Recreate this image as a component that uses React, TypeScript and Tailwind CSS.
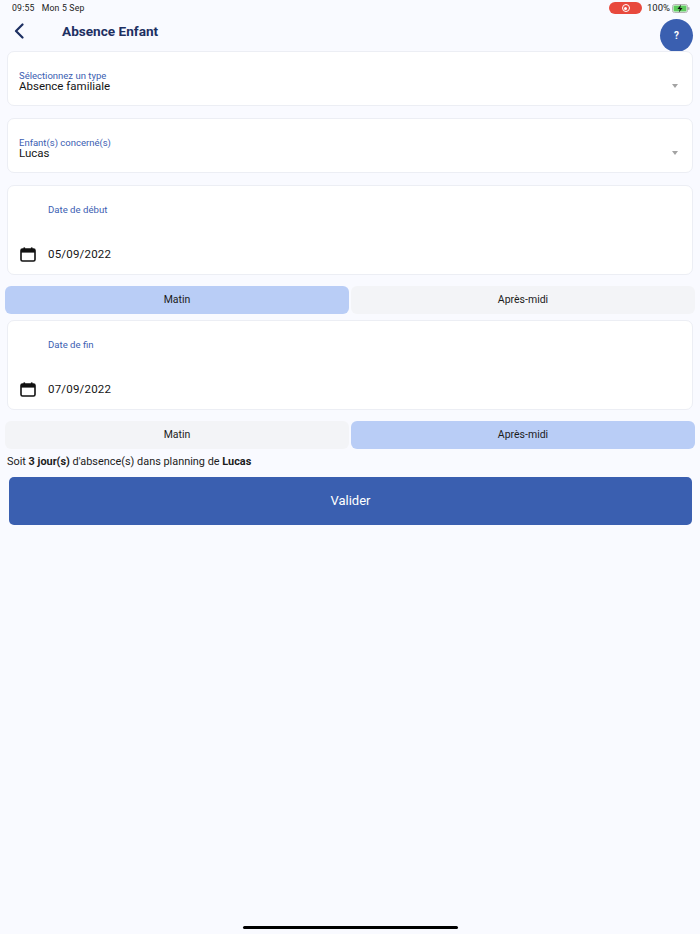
const SelectCard = ({ label, value, mb }: { label: string; value: string; mb: string }) => (
  <div className={`mx-[7px] ${mb} relative h-[55px] rounded-[7px] border border-[#eceef4] bg-white pl-[11px] pt-[18px]`}>
    <div className="text-[9.5px] leading-[11px] text-[#3b60b2]">{label}</div>
    <div className="text-[11.5px] leading-[11px] text-[#151515]">{value}</div>
    <div className="absolute right-[14px] top-[32px] h-0 w-0 border-x-[3.5px] border-t-[4px] border-x-transparent border-t-[#a3a3a3]" />
  </div>
)

const CalendarIcon = () => (
  <svg width="16" height="15" viewBox="0 0 16 15" className="block">
    <rect x="1" y="2" width="14" height="12" rx="1.5" fill="none" stroke="#111" strokeWidth="1.6" />
    <rect x="1" y="2" width="14" height="3.6" fill="#111" />
    <rect x="3.5" y="0.4" width="1.6" height="2.4" fill="#111" />
    <rect x="10.9" y="0.4" width="1.6" height="2.4" fill="#111" />
  </svg>
)

const DateCard = ({ label, value, mb }: { label: string; value: string; mb: string }) => (
  <div className={`mx-[7px] ${mb} h-[90px] rounded-[7px] border border-[#eceef4] bg-white pl-[12px] pt-[18px]`}>
    <div className="pl-[28px] text-[9.6px] leading-[12px] text-[#3b60b2]">{label}</div>
    <div className="mt-[30px] flex items-center">
      <CalendarIcon />
      <span className="ml-[12px] text-[11.5px] leading-[16px] tracking-[0.2px] text-[#151515]">{value}</span>
    </div>
  </div>
)

const Toggle = ({ active, mb }: { active: 'left' | 'right'; mb: string }) => (
  <div className={`mx-[5px] ${mb} flex h-[28px] gap-[2px]`}>
    {['Matin', 'Après-midi'].map((label, i) => {
      const isOn = (i === 0) === (active === 'left')
      return (
        <div
          key={label}
          className={`flex flex-1 items-center justify-center rounded-[6px] text-[10.5px] text-[#1c1c1c] ${isOn ? 'bg-[#b9cdf6]' : 'bg-[#f3f4f7]'}`}
        >
          {label}
        </div>
      )
    })}
  </div>
)

export default function App() {
  return (
    <div className="relative h-[934px] w-[700px] overflow-hidden bg-[#f9faff] font-['Roboto',sans-serif]">
      {/* status bar */}
      <div className="flex h-[16px] items-center justify-between pl-[12px] pr-[10px] text-[#222]">
        <div className="flex gap-[7px] text-[8.7px] leading-[16px] tracking-[0.2px]">
          <span>09:55</span>
          <span>Mon 5 Sep</span>
        </div>
        <div className="flex items-center text-[9.5px] leading-[16px]">
          <div className="mr-[5px] flex h-[12px] w-[33px] items-center justify-center rounded-full bg-[#e8493d]">
            <div className="flex h-[8px] w-[8px] items-center justify-center rounded-full border border-white">
              <div className="h-[3px] w-[3px] rounded-full bg-white" />
            </div>
          </div>
          <span>100%</span>
          <svg width="18" height="9" viewBox="0 0 18 9" className="ml-[2px]">
            <rect x="0.5" y="0.5" width="15" height="8" rx="2" fill="none" stroke="#b5b5b5" />
            <rect x="1.5" y="1.5" width="13" height="6" rx="1" fill="#5ecb5e" />
            <rect x="16" y="3" width="1.5" height="3" rx="0.7" fill="#b5b5b5" />
            <path d="M9 0.5 L5.5 5 H7.8 L6.8 8.5 L10.5 4 H8.2 Z" fill="#111" />
          </svg>
        </div>
      </div>

      {/* header */}
      <div className="flex h-[30px] items-center pl-[14px]">
        <svg width="10" height="16" viewBox="0 0 10 16" fill="none" stroke="#1d2f62" strokeWidth="2.2" strokeLinecap="round" strokeLinejoin="round">
          <path d="M8.5 1.5 L2 8 L8.5 14.5" />
        </svg>
        <span className="ml-[38px] text-[13.6px] font-bold text-[#1d2f62]">Absence Enfant</span>
      </div>

      <div className="absolute right-[7px] top-[19px] flex h-[33px] w-[33px] items-center justify-center rounded-full bg-[#3a5fb0] text-[10px] font-bold text-white">?</div>

      <div className="h-[5px]" />
      <SelectCard label="Sélectionnez un type" value="Absence familiale" mb="mb-[12px]" />
      <SelectCard label="Enfant(s) concerné(s)" value="Lucas" mb="mb-[12px]" />
      <DateCard label="Date de début" value="05/09/2022" mb="mb-[11px]" />
      <Toggle active="left" mb="mb-[6px]" />
      <DateCard label="Date de fin" value="07/09/2022" mb="mb-[11px]" />
      <Toggle active="right" mb="mb-[5px]" />

      <div className="pl-[7px] text-[10.9px] leading-[16px] text-[#1c1c1c]">
        Soit <b>3 jour(s)</b> d'absence(s) dans planning de <b>Lucas</b>
      </div>

      <button className="ml-[9px] mt-[7px] flex h-[48px] w-[683px] items-center justify-center rounded-[5px] bg-[#3a5fb0] text-[13px] text-white">
        Valider
      </button>

      <div className="absolute bottom-[5px] left-[243px] h-[3px] w-[215px] rounded-full bg-black" />
    </div>
  )
}
